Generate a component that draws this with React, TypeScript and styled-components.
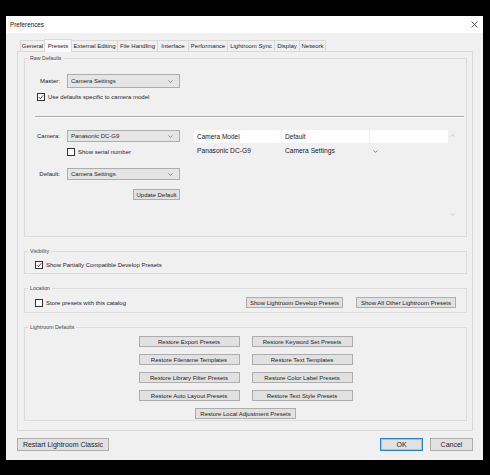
import styled, { createGlobalStyle } from "styled-components";

const GlobalStyle = createGlobalStyle`
  * { box-sizing: border-box; }
  html, body {
    margin: 0;
    background: #000;
    width: 490px;
    height: 475px;
    overflow: hidden;
  }
`;

const Screen = styled.div`
  padding: 16px 0 0 6px;
`;

const Window = styled.div`
  width: 477px;
  height: 444px;
  background: #f0f0f0;
  display: flex;
  flex-direction: column;
  font-family: "Liberation Sans", Arial, sans-serif;
  font-size: 6px;
  color: #1e1e1e;
`;

const TitleBar = styled.div`
  height: 17px;
  background: #fff;
  display: flex;
  align-items: center;
  justify-content: space-between;
  padding: 0 5px 0 4px;
  font-size: 6.3px;
  color: #111;
`;

const Body = styled.div`
  flex: 1;
  display: flex;
  flex-direction: column;
  padding: 5px 10px 0 11px;
`;

const Tabs = styled.div`
  display: flex;
  align-items: flex-end;
  height: 13px;
  padding-left: 3px;
`;

const Tab = styled.div<{ $w: number; $active?: boolean }>`
  width: ${(p) => p.$w}px;
  height: ${(p) => (p.$active ? 13 : 11)}px;
  margin-bottom: ${(p) => (p.$active ? -1 : 0)}px;
  position: relative;
  z-index: ${(p) => (p.$active ? 1 : 0)};
  display: flex;
  align-items: center;
  justify-content: center;
  border: 1px solid #d9d9d9;
  border-bottom: none;
  margin-right: -1px;
  background: ${(p) => (p.$active ? "#fbfbfb" : "#f0f0f0")};
  white-space: nowrap;
`;

const Panel = styled.div`
  height: 380px;
  border: 1px solid #d9d9d9;
  padding: 6px 5px 0 6px;
  display: flex;
  flex-direction: column;
  gap: 14px;
`;

const Group = styled.div<{ $h: number }>`
  height: ${(p) => p.$h}px;
  border: 1px solid #dcdcdc;
  display: flex;
  flex-direction: column;
`;

const GroupTitle = styled.div`
  align-self: flex-start;
  height: 8px;
  line-height: 8px;
  margin: -5px 0 0 3px;
  padding: 0 2px;
  background: #f0f0f0;
  font-size: 5.3px;
  color: #444;
`;

const FieldRow = styled.div<{ $top: number }>`
  display: grid;
  grid-template-columns: 42px 113px;
  align-items: center;
  margin-top: ${(p) => p.$top}px;
`;

const FieldLabel = styled.div`
  text-align: right;
  padding-right: 7px;
  white-space: nowrap;
`;

const Select = styled.div<{ $h: number }>`
  height: ${(p) => p.$h}px;
  background: #e5e5e5;
  border: 1px solid #adadad;
  display: flex;
  align-items: center;
  justify-content: space-between;
  padding: 0 6px 0 3px;
`;

const CheckRow = styled.div<{ $top: number; $left: number }>`
  display: flex;
  align-items: center;
  gap: 3px;
  margin-top: ${(p) => p.$top}px;
  padding-left: ${(p) => p.$left}px;
  white-space: nowrap;
`;

const Box = styled.div`
  width: 8px;
  height: 8px;
  border: 1px solid #333;
  background: #fff;
  display: flex;
  align-items: center;
  justify-content: center;
`;

const Separator = styled.div`
  margin: 15px 2px 0 10px;
  height: 2px;
  border-top: 1px solid #a9a9a9;
  border-bottom: 1px solid #fff;
`;

const CameraSection = styled.div`
  display: flex;
  gap: 14px;
  margin-top: 12px;
`;

const LeftCol = styled.div`
  width: 155px;
  display: flex;
  flex-direction: column;
`;

const ButtonRow = styled.div<{ $top: number }>`
  display: flex;
  justify-content: flex-end;
  margin-top: ${(p) => p.$top}px;
`;

const Button = styled.div<{ $w: number }>`
  width: ${(p) => p.$w}px;
  height: 11px;
  background: #e1e1e1;
  border: 1px solid #adadad;
  display: flex;
  align-items: center;
  justify-content: center;
  white-space: nowrap;
  color: #222;
`;

const FooterButton = styled(Button)<{ $primary?: boolean }>`
  height: 13px;
  font-size: 7px;
  border-color: ${(p) => (p.$primary ? "#2f7fc4" : "#adadad")};
  box-shadow: ${(p) => (p.$primary ? "inset 0 0 0 1px #9fc4e6" : "none")};
`;

const Table = styled.div`
  width: 263px;
  height: 91px;
  display: flex;
`;

const TableMain = styled.div`
  flex: 1;
  display: flex;
  flex-direction: column;
`;

const HeaderRow = styled.div`
  display: grid;
  grid-template-columns: 87px 87px 1fr;
  column-gap: 1px;
  height: 13px;
  background: #f0f0f0;
`;

const HeaderCell = styled.div`
  background: #fff;
  display: flex;
  align-items: center;
  padding-left: 3px;
  font-size: 6.5px;
  color: #222;
`;

const DataRow = styled.div`
  display: grid;
  grid-template-columns: 88px 88px 1fr;
  height: 14px;
  align-items: center;
  font-size: 6.7px;
  color: #1a1a1a;
`;

const DataCell = styled.div`
  padding-left: 3px;
  white-space: nowrap;
`;

const ScrollCol = styled.div`
  width: 9px;
  display: flex;
  flex-direction: column;
  justify-content: space-between;
  align-items: center;
  padding: 4px 0 5px;
`;

const LocationRow = styled.div`
  display: flex;
  align-items: center;
  gap: 13px;
  margin-top: 5px;
  padding: 0 10px;
`;

const Grow = styled.div`
  flex: 1;
`;

const RestoreGrid = styled.div`
  display: grid;
  grid-template-columns: 101px 101px;
  column-gap: 12px;
  row-gap: 7px;
  justify-content: center;
  margin-top: 5px;
`;

const Wide = styled.div`
  grid-column: 1 / span 2;
  justify-self: center;
`;

const Footer = styled.div`
  display: flex;
  gap: 7px;
  margin-top: 7px;
`;

const Chevron = ({ up, color = "#666" }: { up?: boolean; color?: string }) => (
  <svg width="5" height="3" viewBox="0 0 5 3">
    <path
      d={up ? "M0.5 2.6 L2.5 0.6 L4.5 2.6" : "M0.5 0.4 L2.5 2.4 L4.5 0.4"}
      fill="none"
      stroke={color}
      strokeWidth="0.7"
    />
  </svg>
);

const Check = ({ checked }: { checked?: boolean }) => (
  <Box>
    {checked && (
      <svg width="6" height="6" viewBox="0 0 6 6">
        <path d="M0.8 3.1 L2.4 4.7 L5.3 1.2" fill="none" stroke="#222" strokeWidth="0.8" />
      </svg>
    )}
  </Box>
);

const Dropdown = ({ value, h }: { value: string; h: number }) => (
  <Select $h={h}>
    <span>{value}</span>
    <Chevron />
  </Select>
);

const tabs: [string, number][] = [
  ["General", 25],
  ["Presets", 28],
  ["External Editing", 47],
  ["File Handling", 41],
  ["Interface", 32],
  ["Performance", 40],
  ["Lightroom Sync", 48],
  ["Display", 26],
  ["Network", 27],
];

const restore = [
  "Restore Export Presets",
  "Restore Keyword Set Presets",
  "Restore Filename Templates",
  "Restore Text Templates",
  "Restore Library Filter Presets",
  "Restore Color Label Presets",
  "Restore Auto Layout Presets",
  "Restore Text Style Presets",
];

export default function App() {
  return (
    <Screen>
      <GlobalStyle />
      <Window>
        <TitleBar>
          <span>Preferences</span>
          <svg width="7" height="7" viewBox="0 0 7 7">
            <path d="M0.5 0.5 L6.5 6.5 M6.5 0.5 L0.5 6.5" stroke="#333" strokeWidth="0.8" />
          </svg>
        </TitleBar>
        <Body>
          <Tabs>
            {tabs.map(([name, w]) => (
              <Tab key={name} $w={w} $active={name === "Presets"}>
                {name}
              </Tab>
            ))}
          </Tabs>
          <Panel>
            <Group $h={179}>
              <GroupTitle>Raw Defaults</GroupTitle>
              <FieldRow $top={12}>
                <FieldLabel>Master:</FieldLabel>
                <Dropdown value="Camera Settings" h={14} />
              </FieldRow>
              <CheckRow $top={5} $left={12}>
                <Check checked />
                <span>Use defaults specific to camera model</span>
              </CheckRow>
              <Separator />
              <CameraSection>
                <LeftCol>
                  <FieldRow $top={0}>
                    <FieldLabel>Camera:</FieldLabel>
                    <Dropdown value="Panasonic DC-G9" h={12} />
                  </FieldRow>
                  <CheckRow $top={6} $left={42}>
                    <Check />
                    <span>Show serial number</span>
                  </CheckRow>
                  <FieldRow $top={12}>
                    <FieldLabel>Default:</FieldLabel>
                    <Dropdown value="Camera Settings" h={12} />
                  </FieldRow>
                  <ButtonRow $top={9}>
                    <Button $w={47}>Update Default</Button>
                  </ButtonRow>
                </LeftCol>
                <Table>
                  <TableMain>
                    <HeaderRow>
                      <HeaderCell>Camera Model</HeaderCell>
                      <HeaderCell>Default</HeaderCell>
                      <HeaderCell />
                    </HeaderRow>
                    <DataRow>
                      <DataCell>Panasonic DC-G9</DataCell>
                      <DataCell>Camera Settings</DataCell>
                      <DataCell>
                        <Chevron color="#555" />
                      </DataCell>
                    </DataRow>
                  </TableMain>
                  <ScrollCol>
                    <Chevron up color="#bbb" />
                    <Chevron color="#bbb" />
                  </ScrollCol>
                </Table>
              </CameraSection>
            </Group>

            <Group $h={23}>
              <GroupTitle>Visibility</GroupTitle>
              <CheckRow $top={6} $left={10}>
                <Check checked />
                <span>Show Partially Compatible Develop Presets</span>
              </CheckRow>
            </Group>

            <Group $h={25}>
              <GroupTitle>Location</GroupTitle>
              <LocationRow>
                <Grow>
                  <CheckRow $top={0} $left={0}>
                    <Check />
                    <span>Store presets with this catalog</span>
                  </CheckRow>
                </Grow>
                <Button $w={97}>Show Lightroom Develop Presets</Button>
                <Button $w={100}>Show All Other Lightroom Presets</Button>
              </LocationRow>
            </Group>

            <Group $h={94}>
              <GroupTitle>Lightroom Defaults</GroupTitle>
              <RestoreGrid>
                {restore.map((r) => (
                  <Button key={r} $w={101}>
                    {r}
                  </Button>
                ))}
                <Wide>
                  <Button $w={101}>Restore Local Adjustment Presets</Button>
                </Wide>
              </RestoreGrid>
            </Group>
          </Panel>
          <Footer>
            <FooterButton $w={92}>Restart Lightroom Classic</FooterButton>
            <Grow />
            <FooterButton $w={43} $primary>
              OK
            </FooterButton>
            <FooterButton $w={43}>Cancel</FooterButton>
          </Footer>
        </Body>
      </Window>
    </Screen>
  );
}
